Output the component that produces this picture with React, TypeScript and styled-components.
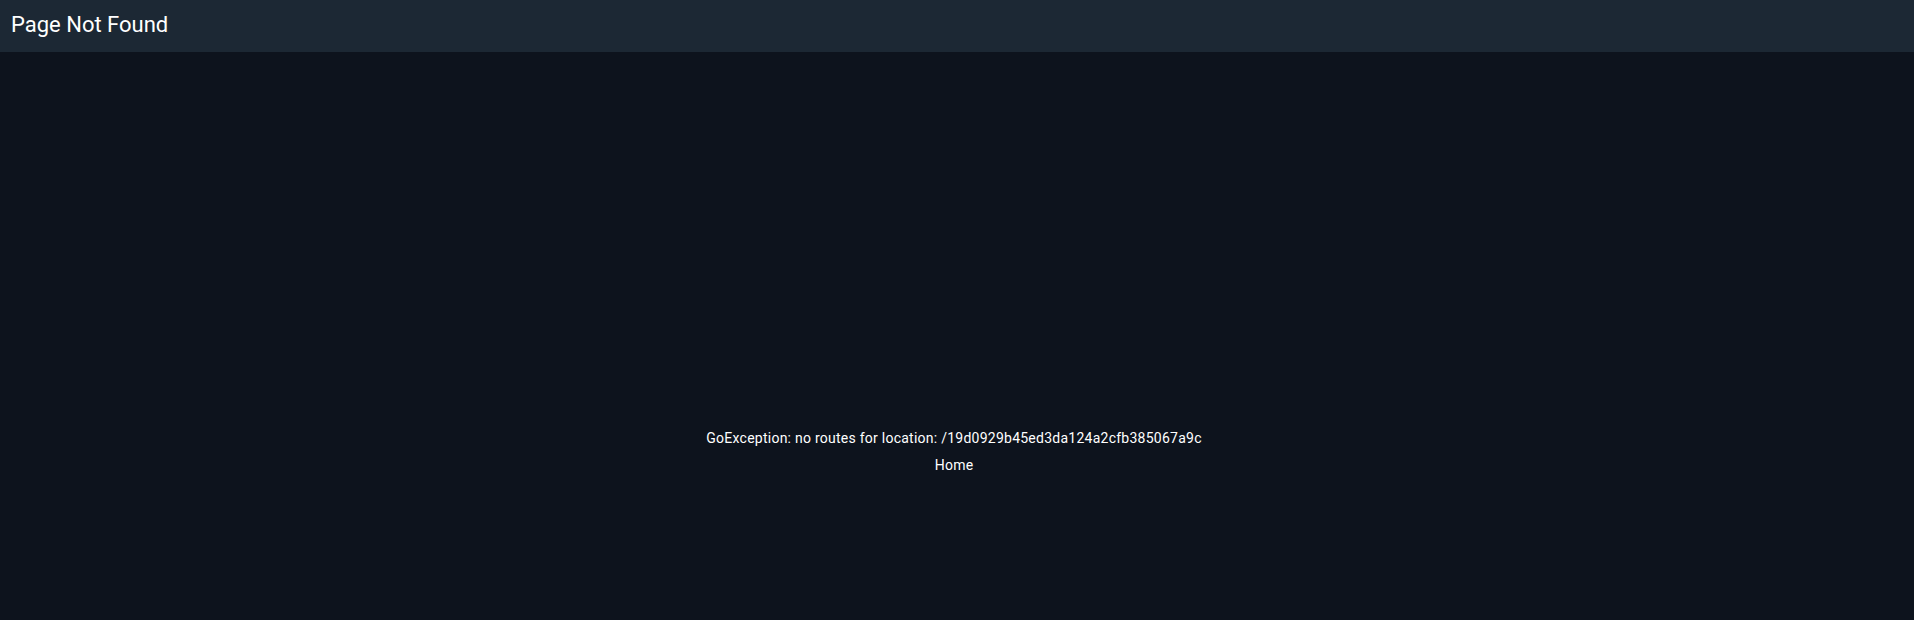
import React from "react";
import styled, { createGlobalStyle } from "styled-components";

const GlobalStyle = createGlobalStyle`
  html, body {
    margin: 0;
    padding: 0;
    background: #0d131d;
  }
  body {
    font-family: Roboto, "Liberation Sans", sans-serif;
  }
`;

const Page = styled.div`
  width: 100vw;
  height: 100vh;
  display: flex;
  flex-direction: column;
  background-color: #0d131d;
  overflow: hidden;
`;

const AppBar = styled.header`
  height: 52px;
  flex-shrink: 0;
  display: flex;
  align-items: center;
  padding: 0 11px 2px;
  box-sizing: border-box;
  background-color: #1c2834;
`;

const Title = styled.h1`
  margin: 0;
  font-size: 22px;
  font-weight: 400;
  color: #ffffff;
  line-height: 1;
`;

const Body = styled.main`
  flex: 1;
  display: flex;
  flex-direction: column;
  align-items: center;
  padding: 377px 6px 0 0;
  gap: 9px;
`;

const Message = styled.p`
  margin: 0;
  font-size: 14px;
  letter-spacing: 0.25px;
  line-height: 18px;
  color: #ffffff;
`;

const HomeLink = styled.a`
  font-size: 14px;
  letter-spacing: 0.25px;
  line-height: 18px;
  color: #ffffff;
  text-decoration: none;
  cursor: pointer;
`;

const App: React.FC = () => {
  return (
    <Page>
      <GlobalStyle />
      <AppBar>
        <Title>Page Not Found</Title>
      </AppBar>
      <Body>
        <Message>
          GoException: no routes for location: /19d0929b45ed3da124a2cfb385067a9c
        </Message>
        <HomeLink href="#">Home</HomeLink>
      </Body>
    </Page>
  );
};

export default App;
